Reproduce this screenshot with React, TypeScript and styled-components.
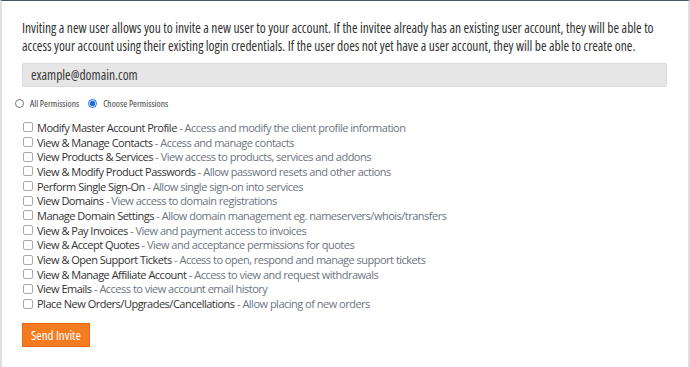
import React from "react";
import styled, { createGlobalStyle } from "styled-components";

const GlobalStyle = createGlobalStyle`
  html, body {
    margin: 0;
    padding: 0;
    background: #ffffff;
  }
  body {
    font-family: "Open Sans", "Liberation Sans", sans-serif;
    color: #333333;
  }
`;

const permissions: { label: string; description: string }[] = [
  {
    label: "Modify Master Account Profile",
    description: "Access and modify the client profile information",
  },
  { label: "View & Manage Contacts", description: "Access and manage contacts" },
  {
    label: "View Products & Services",
    description: "View access to products, services and addons",
  },
  {
    label: "View & Modify Product Passwords",
    description: "Allow password resets and other actions",
  },
  {
    label: "Perform Single Sign-On",
    description: "Allow single sign-on into services",
  },
  { label: "View Domains", description: "View access to domain registrations" },
  {
    label: "Manage Domain Settings",
    description: "Allow domain management eg. nameservers/whois/transfers",
  },
  {
    label: "View & Pay Invoices",
    description: "View and payment access to invoices",
  },
  {
    label: "View & Accept Quotes",
    description: "View and acceptance permissions for quotes",
  },
  {
    label: "View & Open Support Tickets",
    description: "Access to open, respond and manage support tickets",
  },
  {
    label: "View & Manage Affiliate Account",
    description: "Access to view and request withdrawals",
  },
  { label: "View Emails", description: "Access to view account email history" },
  {
    label: "Place New Orders/Upgrades/Cancellations",
    description: "Allow placing of new orders",
  },
];

const App: React.FC = () => {
  return (
    <>
      <GlobalStyle />
      <Card>
        <Intro>
          Inviting a new user allows you to invite a new user to your account.
          If the invitee already has an existing user account, they will be
          able to access your account using their existing login credentials.
          If the user does not yet have a user account, they will be able to
          create one.
        </Intro>
        <EmailInput type="email" placeholder="example@domain.com" />
        <RadioRow>
          <RadioLabel>
            <Radio type="radio" name="perm" />
            All Permissions
          </RadioLabel>
          <RadioLabel>
            <Radio type="radio" name="perm" defaultChecked />
            Choose Permissions
          </RadioLabel>
        </RadioRow>
        <PermissionList>
          {permissions.map((p) => (
            <PermissionRow key={p.label}>
              <Checkbox type="checkbox" />
              <PermissionName>{p.label}</PermissionName>
              <Description>&nbsp;- {p.description}</Description>
            </PermissionRow>
          ))}
        </PermissionList>
        <SendButton type="button">Send Invite</SendButton>
      </Card>
    </>
  );
};

export default App;

const Card = styled.div`
  box-sizing: border-box;
  width: 690px;
  height: 367px;
  margin: 0;
  padding: 18px 20px 0 20px;
  border-top: 1px solid #4b5563;
  border-left: 2px solid #dde0e4;
  border-right: 2px solid #dde0e4;
  background: #ffffff;
`;

const Intro = styled.p`
  margin: 0 0 8px 0;
  font-size: 13.5px;
  font-stretch: 75%;
  line-height: 18px;
  color: #333333;
`;

const EmailInput = styled.input`
  box-sizing: border-box;
  display: block;
  width: 645px;
  height: 24px;
  padding: 0 8px;
  border: 1px solid #d9dadc;
  border-radius: 2px;
  background: #e6e6e6;
  font-family: inherit;
  font-size: 13.5px;
  font-stretch: 75%;
  color: #333;

  &::placeholder {
    color: #3a3a3a;
  }
`;

const RadioRow = styled.div`
  display: flex;
  align-items: center;
  gap: 7px;
  margin: 10px 0 10px -9px;
`;

const RadioLabel = styled.label`
  display: flex;
  align-items: center;
  font-size: 9.5px;
  font-stretch: 75%;
  color: #444;
`;

const Radio = styled.input`
  width: 9px;
  height: 9px;
  margin: 0 6px 0 2px;
  accent-color: #1a6fe0;
`;

const PermissionList = styled.div`
  display: flex;
  flex-direction: column;
`;

const PermissionRow = styled.label`
  display: flex;
  align-items: center;
  height: 14.7px;
  font-size: 11px;
  letter-spacing: -0.5px;
  white-space: nowrap;
`;

const Checkbox = styled.input`
  appearance: none;
  box-sizing: border-box;
  width: 10px;
  height: 10px;
  margin: 0 4px 0 1px;
  border: 1px solid #a9aaac;
  border-radius: 2px;
  background: #ffffff;
`;

const PermissionName = styled.span`
  color: #333333;
`;

const Description = styled.span`
  color: #6c7480;
`;

const SendButton = styled.button`
  margin-top: 12px;
  height: 24px;
  padding: 0 8px;
  border: 1px solid #e86a10;
  border-radius: 0;
  background: #f47b20;
  color: #ffffff;
  font-family: inherit;
  font-size: 13px;
  font-stretch: 75%;
`;
